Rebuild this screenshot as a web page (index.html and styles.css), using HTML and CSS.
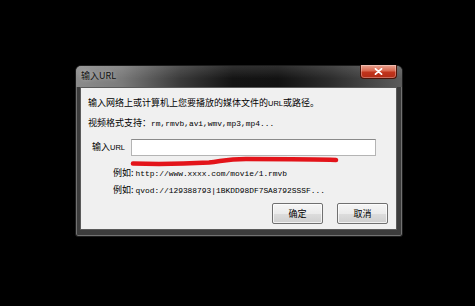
FILE: index.html
```html
<!DOCTYPE html>
<html lang="zh-CN">
<head>
<meta charset="utf-8">
<title>输入URL</title>
<link rel="stylesheet" href="styles.css">
</head>
<body>
<div class="window">
  <div class="titlebar">
    <span class="title">输入URL</span>
    <button class="close" aria-label="关闭">
      <svg width="9" height="7" viewBox="0 0 9 7"><path d="M1.5 0.8 L7.5 6.2 M7.5 0.8 L1.5 6.2" stroke="#fff" stroke-width="1.8" stroke-linecap="round"/></svg>
    </button>
  </div>
  <div class="client">
    <p class="line">输入网络上或计算机上您要播放的媒体文件的<span class="small">URL</span>或路径。</p>
    <p class="line gap8">视频格式支持：<span class="mono">rm,rmvb,avi,wmv,mp3,mp4...</span></p>
    <div class="row">
      <label class="label" for="url">输入<span class="small">URL</span></label>
      <input id="url" class="input" type="text">
    </div>
    <p class="line example ex1">例如: <span class="mono">http://www.xxxx.com/movie/1.rmvb</span></p>
    <p class="line example ex2">例如: <span class="mono">qvod://129388793|1BKDD98DF7SA8792SSSF...</span></p>
    <div class="buttons">
      <button class="btn">确定</button>
      <button class="btn">取消</button>
    </div>
    <svg class="scribble" width="320" height="90" viewBox="0 0 320 90">
      <path d="M52 75.5 C 80 76.5, 110 75.5, 128 74.5 C 140 73.5, 145 71, 165 71 C 200 71, 235 71, 255 72" stroke="#e3141a" stroke-width="4.6" fill="none" stroke-linecap="round"/>
    </svg>
  </div>
</div>
</body>
</html>
```
FILE: styles.css
```css
html, body {
  margin: 0;
  padding: 0;
}
body {
  width: 475px;
  height: 306px;
  background: #000;
  overflow: hidden;
  padding: 65px 0 0 75px;
  box-sizing: border-box;
  font-family: "Noto Sans CJK SC", "Noto Sans", sans-serif;
  color: #000;
}
.window {
  width: 328px;
  height: 172px;
  box-sizing: border-box;
  border: 1px solid #1c1c1c;
  border-radius: 6px 6px 3px 3px;
  background: #3c3c3c;
  box-shadow: inset 0 0 0 1px rgba(255,255,255,0.28);
  display: flex;
  flex-direction: column;
}
.titlebar {
  height: 21px;
  flex: none;
  display: flex;
  align-items: flex-start;
  border-radius: 5px 5px 0 0;
  background:
    linear-gradient(to bottom, rgba(255,255,255,0.12), rgba(255,255,255,0) 60%),
    linear-gradient(to right, #8c8c8c 0%, #7a7a7a 14%, #3a3a3a 32%, #141414 48%, #121212 62%, #2c2c2c 78%, #4a4a4a 92%, #5c5c5c 100%);
}
.title {
  font-size: 9px;
  line-height: 12px;
  margin: 4px 0 0 5px;
  color: #111;
  text-shadow: 0 0 4px rgba(255,255,255,0.5);
}
.close {
  margin: -1px 5px 0 auto;
  width: 37px;
  height: 14px;
  padding: 0;
  border: 1px solid #4a1408;
  border-top: none;
  border-radius: 0 0 4px 4px;
  background: linear-gradient(to bottom, #e9a391 0%, #d9684f 45%, #c1341c 55%, #b22c16 100%);
  box-shadow: inset 0 0 0 1px rgba(255,255,255,0.3);
  display: flex;
  align-items: center;
  justify-content: center;
}
.client {
  position: relative;
  flex: none;
  height: 143px;
  margin: 0 5px 0 4px;
  box-sizing: border-box;
  border: 1px solid #5a5a5a;
  background: #f0f0f0;
  padding: 9px 8px 0 7px;
}
.line {
  margin: 0;
  font-size: 9px;
  line-height: 12px;
  height: 12px;
  white-space: nowrap;
}
.gap8 {
  margin-top: 8px;
}
.small {
  font-family: "Liberation Sans", sans-serif;
  font-size: 7.5px;
}
.mono {
  font-family: "Liberation Mono", monospace;
  font-size: 7.9px;
}
.row {
  display: flex;
  align-items: center;
  margin-top: 10px;
  height: 17px;
}
.label {
  width: 39px;
  margin-left: 4px;
  font-size: 9px;
  line-height: 12px;
  white-space: nowrap;
}
.input {
  width: 245px;
  height: 17px;
  box-sizing: border-box;
  margin: 0;
  padding: 0;
  border: 1px solid #b4b4b4;
  border-top-color: #8a8a8a;
  background: #fff;
  outline: none;
}
.example {
  margin-left: 25px;
}
.ex1 {
  margin-top: 11px;
}
.ex2 {
  margin-top: 5px;
}
.buttons {
  display: flex;
  justify-content: flex-end;
  gap: 14px;
  margin-top: 7px;
}
.btn {
  width: 51px;
  height: 21px;
  padding: 0;
  margin: 0;
  box-sizing: border-box;
  border: 1px solid #707070;
  border-radius: 2px;
  background: linear-gradient(to bottom, #f6f6f6 0%, #ebebeb 50%, #dddddd 51%, #cfcfcf 100%);
  box-shadow: inset 0 0 0 1px rgba(255,255,255,0.7);
  font-family: "Noto Sans CJK SC", sans-serif;
  font-size: 9px;
  color: #000;
}
.scribble {
  position: absolute;
  left: 0;
  top: 0;
  pointer-events: none;
}
```
